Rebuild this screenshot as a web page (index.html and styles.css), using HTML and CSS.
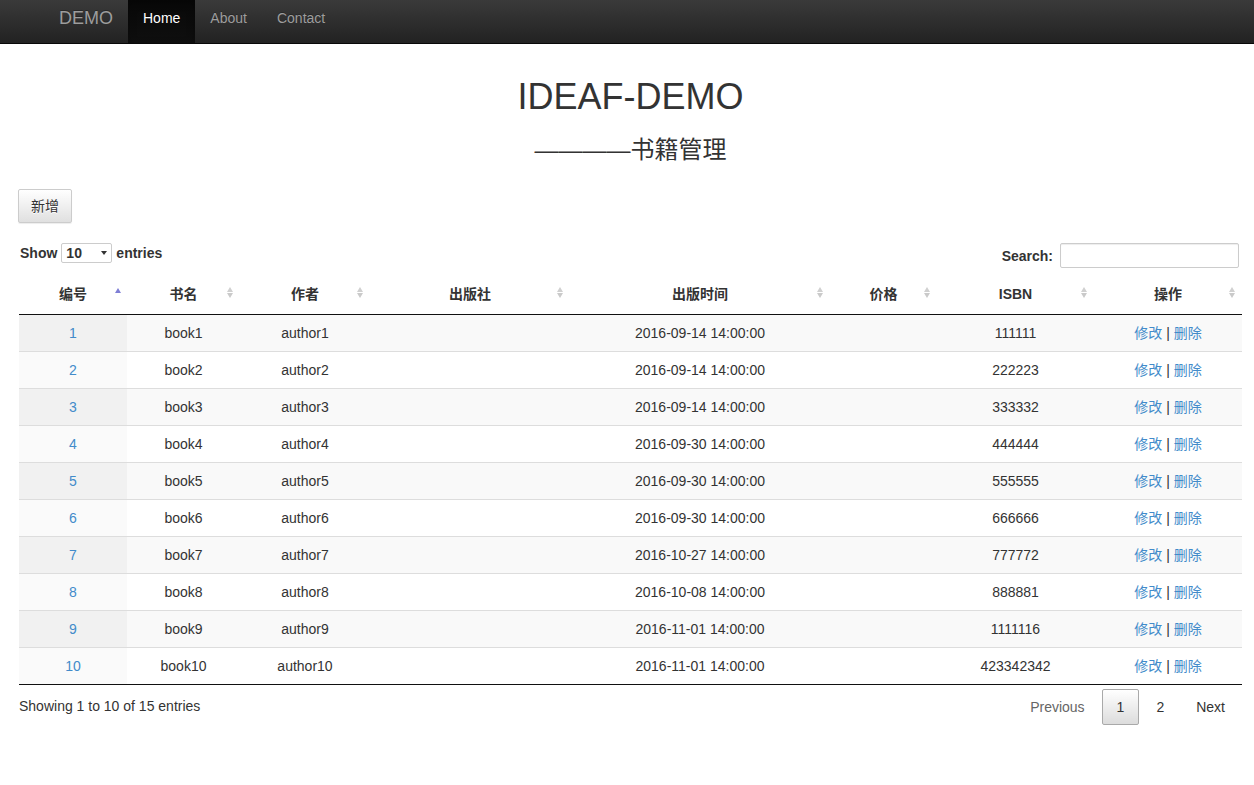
FILE: index.html
```html
<!DOCTYPE html>
<html lang="zh-CN">
<head>
<meta charset="utf-8">
<title>IDEAF-DEMO</title>
<link rel="stylesheet" href="styles.css">
</head>
<body>
<nav class="navbar">
  <a class="brand" href="#">DEMO</a>
  <ul class="nav">
    <li class="active"><a href="#">Home</a></li>
    <li><a href="#">About</a></li>
    <li><a href="#">Contact</a></li>
  </ul>
</nav>
<main class="page">
  <h1 class="title">IDEAF-DEMO</h1>
  <h3 class="subtitle">————书籍管理</h3>
  <div class="toolbar"><button class="btn">新增</button></div>
  <div class="dt-wrapper">
    <div class="dt-top">
      <label class="dt-length">Show
        <span class="select-wrap"><select class="select"><option>10</option><option>25</option></select><span class="caret"></span></span>
        entries</label>
      <label class="dt-filter">Search: <input class="search" type="search"></label>
    </div>
    <table class="dt">
      <colgroup>
        <col class="c1"><col class="c2"><col class="c3"><col class="c4"><col class="c5"><col class="c6"><col class="c7"><col class="c8">
      </colgroup>
      <thead>
        <tr>
          <th class="sort-asc">编号</th>
          <th class="sort-both">书名</th>
          <th class="sort-both">作者</th>
          <th class="sort-both">出版社</th>
          <th class="sort-both">出版时间</th>
          <th class="sort-both">价格</th>
          <th class="sort-both">ISBN</th>
          <th class="sort-both">操作</th>
        </tr>
      </thead>
      <tbody>
        <tr class="odd"><td class="sorted"><a href="#">1</a></td><td>book1</td><td>author1</td><td></td><td>2016-09-14 14:00:00</td><td></td><td>111111</td><td><a href="#">修改</a> | <a href="#">删除</a></td></tr>
        <tr class="even"><td class="sorted"><a href="#">2</a></td><td>book2</td><td>author2</td><td></td><td>2016-09-14 14:00:00</td><td></td><td>222223</td><td><a href="#">修改</a> | <a href="#">删除</a></td></tr>
        <tr class="odd"><td class="sorted"><a href="#">3</a></td><td>book3</td><td>author3</td><td></td><td>2016-09-14 14:00:00</td><td></td><td>333332</td><td><a href="#">修改</a> | <a href="#">删除</a></td></tr>
        <tr class="even"><td class="sorted"><a href="#">4</a></td><td>book4</td><td>author4</td><td></td><td>2016-09-30 14:00:00</td><td></td><td>444444</td><td><a href="#">修改</a> | <a href="#">删除</a></td></tr>
        <tr class="odd"><td class="sorted"><a href="#">5</a></td><td>book5</td><td>author5</td><td></td><td>2016-09-30 14:00:00</td><td></td><td>555555</td><td><a href="#">修改</a> | <a href="#">删除</a></td></tr>
        <tr class="even"><td class="sorted"><a href="#">6</a></td><td>book6</td><td>author6</td><td></td><td>2016-09-30 14:00:00</td><td></td><td>666666</td><td><a href="#">修改</a> | <a href="#">删除</a></td></tr>
        <tr class="odd"><td class="sorted"><a href="#">7</a></td><td>book7</td><td>author7</td><td></td><td>2016-10-27 14:00:00</td><td></td><td>777772</td><td><a href="#">修改</a> | <a href="#">删除</a></td></tr>
        <tr class="even"><td class="sorted"><a href="#">8</a></td><td>book8</td><td>author8</td><td></td><td>2016-10-08 14:00:00</td><td></td><td>888881</td><td><a href="#">修改</a> | <a href="#">删除</a></td></tr>
        <tr class="odd"><td class="sorted"><a href="#">9</a></td><td>book9</td><td>author9</td><td></td><td>2016-11-01 14:00:00</td><td></td><td>1111116</td><td><a href="#">修改</a> | <a href="#">删除</a></td></tr>
        <tr class="even"><td class="sorted"><a href="#">10</a></td><td>book10</td><td>author10</td><td></td><td>2016-11-01 14:00:00</td><td></td><td>423342342</td><td><a href="#">修改</a> | <a href="#">删除</a></td></tr>
      </tbody>
    </table>
    <div class="dt-bottom">
      <div class="dt-info">Showing 1 to 10 of 15 entries</div>
      <div class="dt-paginate">
        <a class="pg disabled" href="#">Previous</a>
        <a class="pg current" href="#">1</a>
        <a class="pg" href="#">2</a>
        <a class="pg" href="#">Next</a>
      </div>
    </div>
  </div>
</main>
</body>
</html>
```

FILE: styles.css
```css
* { box-sizing: border-box; }
html, body { margin: 0; padding: 0; background: #fff; }
body {
  font-family: "Liberation Sans", Arial, "Noto Sans CJK SC", sans-serif;
  font-size: 14px;
  line-height: 20px;
  color: #333;
}
a { color: #428bca; text-decoration: none; }

/* navbar */
.navbar {
  display: flex;
  align-items: flex-start;
  height: 44px;
  padding-left: 44px;
  background: linear-gradient(to bottom, #3a3a3a 0%, #222 100%);
  border-bottom: 1px solid #080808;
}
.brand {
  display: block;
  padding: 8px 15px 15px;
  font-size: 18px;
  line-height: 20px;
  color: #9d9d9d;
  text-shadow: 0 -1px 0 rgba(0,0,0,.25);
}
.nav { display: flex; list-style: none; margin: 0; padding: 0; }
.nav li a {
  display: block;
  padding: 8px 15px 15px;
  line-height: 20px;
  color: #9d9d9d;
  text-shadow: 0 -1px 0 rgba(0,0,0,.25);
}
.nav li.active a {
  color: #fff;
  background: linear-gradient(to bottom, #080808 0%, #0f0f0f 100%);
  box-shadow: inset 0 3px 9px rgba(0,0,0,.25);
}

/* page */
.page { padding: 0 12px 0 19px; }
.title {
  margin: 33px 0 0;
  text-align: center;
  font-size: 36px;
  line-height: 40px;
  font-weight: normal;
  color: #333;
}
.subtitle {
  margin: 20px 0 0;
  text-align: center;
  font-size: 24px;
  line-height: 26px;
  font-weight: normal;
  color: #333;
}
.toolbar { margin-top: 26px; margin-left: -1px; }
.btn {
  font-family: inherit;
  font-size: 14px;
  line-height: 20px;
  color: #333;
  padding: 6px 12px;
  border: 1px solid #ccc;
  border-radius: 2px;
  background: linear-gradient(to bottom, #fff 0%, #e0e0e0 100%);
  box-shadow: inset 0 1px 0 rgba(255,255,255,.15), 0 1px 1px rgba(0,0,0,.075);
  text-shadow: 0 1px 0 #fff;
}

/* datatables */
.dt-wrapper { margin-top: 20px; }
.dt-top {
  display: flex;
  justify-content: space-between;
  align-items: flex-start;
}
.dt-length, .dt-filter { font-weight: bold; display: flex; align-items: center; }
.dt-length { padding-left: 1px; }
.select-wrap { position: relative; display: inline-block; margin: 0 4px 0 4px; }
.select {
  appearance: none;
  -webkit-appearance: none;
  width: 51px;
  height: 20px;
  padding: 0 0 0 4px;
  font-family: inherit;
  font-weight: bold;
  font-size: 14px;
  color: #333;
  background: #fff;
  border: 1px solid #ccc;
  border-radius: 2px;
}
.caret {
  position: absolute;
  right: 5px;
  top: 8px;
  width: 0; height: 0;
  border-left: 3px solid transparent;
  border-right: 3px solid transparent;
  border-top: 4px solid #333;
  pointer-events: none;
}
.dt-filter { padding-right: 3px; margin-top: 0; }
.search {
  margin-left: 7px;
  width: 179px;
  height: 25px;
  border: 1px solid #ccc;
  border-radius: 2px;
  box-shadow: inset 0 1px 1px rgba(0,0,0,.075);
}

.dt {
  width: 100%;
  margin-top: 6px;
  table-layout: fixed;
  border-collapse: separate;
  border-spacing: 0;
}
.c1 { width: 108px; } .c2 { width: 113px; } .c3 { width: 130px; } .c4 { width: 200px; }
.c5 { width: 260px; } .c6 { width: 107px; } .c7 { width: 157px; } .c8 { width: 148px; }

.dt th {
  position: relative;
  padding: 10px 18px;
  font-weight: bold;
  text-align: center;
  border-bottom: 1px solid #111;
}
.dt th::before, .dt th::after {
  content: "";
  position: absolute;
  width: 0; height: 0;
  border-left: 3px solid transparent;
  border-right: 3px solid transparent;
}
.sort-both::before { right: 7px; top: 13px; border-bottom: 5px solid #d0d0d0; }
.sort-both::after { right: 7px; top: 19px; border-top: 5px solid #cacaca; }
.sort-asc::before { right: 6px; top: 14px; border-left-width: 4px; border-right-width: 4px; border-bottom: 5px solid #7f7fd5; }
.sort-asc::after { display: none; }

.dt td {
  padding: 8px 10px;
  text-align: center;
  white-space: nowrap;
  border-top: 1px solid #ddd;
}
.dt tbody tr:first-child td { border-top: none; }
.dt tbody tr:last-child td { border-bottom: 1px solid #111; }
.dt tr.odd td { background: #f9f9f9; }
.dt tr.even td { background: #fff; }
.dt tr.odd td.sorted { background: #f1f1f1; }
.dt tr.even td.sorted { background: #fafafa; }

.dt-bottom { display: flex; justify-content: space-between; align-items: flex-start; }
.dt-info { padding-top: 11px; }
.dt-paginate { display: flex; padding-top: 4px; margin-right: 2px; }
.pg {
  display: block;
  min-width: 21px;
  padding: 7px 14px;
  margin-left: 2px;
  text-align: center;
  color: #333;
  border: 1px solid transparent;
  border-radius: 2px;
}
.pg.disabled { color: #666; }
.pg.current {
  border-color: #a9a9a9;
  background: linear-gradient(to bottom, #fff 0%, #dcdcdc 100%);
}
```
